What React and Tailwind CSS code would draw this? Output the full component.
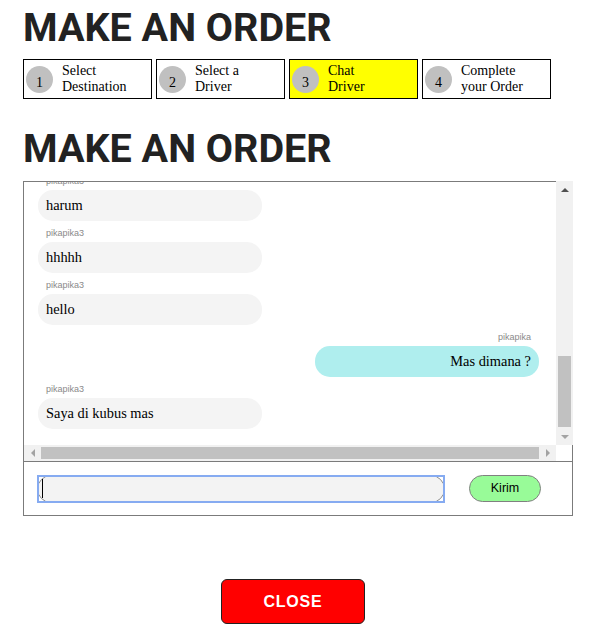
const serif = { fontFamily: '"Liberation Serif", "Times New Roman", serif' };

function Triangle({ dir, color }) {
  const paths = {
    up: "M0 4 L4 0 L8 4 Z",
    down: "M0 0 L8 0 L4 4 Z",
  };
  if (dir === "left" || dir === "right") {
    const d = dir === "left" ? "M4 0 L4 8 L0 4 Z" : "M0 0 L4 4 L0 8 Z";
    return (
      <svg width="4" height="8" viewBox="0 0 4 8">
        <path d={d} fill={color} />
      </svg>
    );
  }
  return (
    <svg width="8" height="4" viewBox="0 0 8 4">
      <path d={paths[dir]} fill={color} />
    </svg>
  );
}

export default function App() {
  const steps = [
    { n: 1, a: "Select", b: "Destination" },
    { n: 2, a: "Select a", b: "Driver" },
    { n: 3, a: "Chat", b: "Driver", active: true },
    { n: 4, a: "Complete", b: "your Order" },
  ];
  const msgs = [
    { u: "pikapika3", t: "harum" },
    { u: "pikapika3", t: "hhhhh" },
    { u: "pikapika3", t: "hello" },
    { u: "pikapika", t: "Mas dimana ?", me: true },
    { u: "pikapika3", t: "Saya di kubus mas" },
  ];
  const heading =
    "text-[39.5px] leading-[44px] font-bold text-[#222222] [font-family:Roboto,'Liberation_Sans',sans-serif]";

  return (
    <div className="w-[593px] min-h-[624px] bg-white pl-[23px] pt-[6px]">
      <h1 className={heading}>MAKE AN ORDER</h1>

      <div className="mt-[9px] flex gap-[4px]">
        {steps.map((s) => (
          <div
            key={s.n}
            className={`flex h-[40px] w-[129px] items-center border border-black ${
              s.active ? "bg-[#ffff00]" : "bg-white"
            }`}
            style={serif}
          >
            <div className="ml-[2px] flex h-[27px] w-[27px] shrink-0 items-end justify-center rounded-full bg-[#c0c0c0] pb-[2px] text-[14px] leading-[16px] text-black">
              {s.n}
            </div>
            <div className="ml-[9px] text-[14px] leading-[16px] text-black">
              <div>{s.a}</div>
              <div>{s.b}</div>
            </div>
          </div>
        ))}
      </div>

      <h2 className={`mt-[28px] ${heading}`}>MAKE AN ORDER</h2>

      <div className="mt-[10px] w-[550px]">
        <div className="flex h-[264px]">
          <div className="flex-1 overflow-hidden border-l border-t border-[#7b7b7b]">
            <div className="-mt-[13px] flex flex-col pl-[14px] pr-[17px]">
              {msgs.map((m, i) => (
                <div
                  key={i}
                  className={`mt-[7px] flex flex-col ${m.me ? "items-end" : "items-start"}`}
                >
                  <div className="mb-[3px] h-[11px] px-[8px] text-[9px] leading-[11px] text-[#8a8a8a] [font-family:'Liberation_Sans',Arial,sans-serif]">
                    {m.u}
                  </div>
                  <div
                    className={`flex h-[31px] w-[224px] items-center rounded-[15px] px-[8px] text-[14.4px] text-black ${
                      m.me ? "justify-end bg-[#afeeee]" : "bg-[#f4f4f4]"
                    }`}
                    style={serif}
                  >
                    {m.t}
                  </div>
                </div>
              ))}
            </div>
          </div>
          <div className="flex w-[17px] flex-col items-center bg-[#f1f1f1]">
            <div className="flex h-[17px] items-center justify-center">
              <Triangle dir="up" color="#505050" />
            </div>
            <div className="h-[158px]" />
            <div className="h-[71px] w-[13px] bg-[#c1c1c1]" />
            <div className="flex-1" />
            <div className="flex h-[17px] items-center justify-center">
              <Triangle dir="down" color="#a3a3a3" />
            </div>
          </div>
        </div>

        <div className="flex h-[16px]">
          <div className="flex flex-1 items-center border-l border-[#7b7b7b] bg-[#f1f1f1]">
            <div className="flex h-full w-[17px] items-center justify-center">
              <Triangle dir="left" color="#a3a3a3" />
            </div>
            <div className="h-[12px] flex-1 bg-[#c1c1c1]" />
            <div className="flex h-full w-[17px] items-center justify-center">
              <Triangle dir="right" color="#a3a3a3" />
            </div>
          </div>
          <div className="w-[17px] border-r border-[#7b7b7b] bg-white" />
        </div>

        <div className="flex h-[55px] items-center border border-[#7b7b7b] pl-[13px]">
          <div className="relative h-[28px] w-[408px]">
            <div className="flex h-full w-full items-center rounded-full border border-[#8f8f8f] bg-[#f3f3f3] pl-[4px]">
              <div className="h-[19px] w-[1px] bg-black" />
            </div>
            <div className="pointer-events-none absolute inset-0 border-2 border-[#86abf1]" />
          </div>
          <div className="ml-[24px] flex h-[27px] w-[72px] items-center justify-center rounded-full border border-[#808080] bg-[#98fb98] text-[12.5px] text-black [font-family:'Liberation_Sans',Arial,sans-serif]">
            Kirim
          </div>
        </div>
      </div>

      <div className="ml-[198px] mt-[63px] flex h-[45px] w-[144px] items-center justify-center rounded-[6px] border border-[#222] bg-[#ff0000] text-[16px] font-bold tracking-[0.8px] text-white [font-family:'Liberation_Sans',Arial,sans-serif]">
        CLOSE
      </div>
    </div>
  );
}
